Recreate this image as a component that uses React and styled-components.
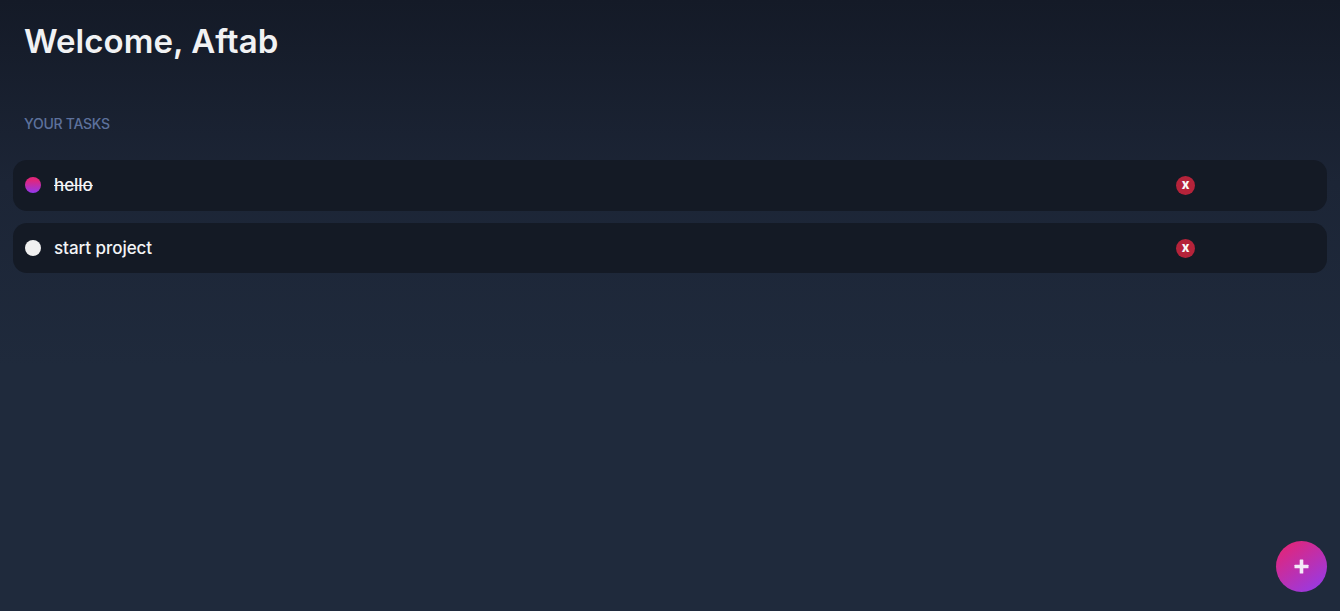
import React from 'react'
import styled, { createGlobalStyle } from 'styled-components'

const Global = createGlobalStyle`
	html, body, #root { height: 100%; }
	body {
		margin: 0;
		font-family: Inter, "Noto Sans", "Liberation Sans", sans-serif;
		color: #f3f4f6;
		background: #1f2a3c;
	}
`

const Page = styled.div`
	position: relative;
	box-sizing: border-box;
	height: 611px;
	overflow: hidden;
	padding: 0 13px;
	background: linear-gradient(180deg, #141a27 0%, #1c2536 30%, #1f2a3c 60%, #1f2a3c 100%);
`

const Heading = styled.h1`
	margin: 0;
	padding: 20px 0 0 11px;
	height: 42px;
	font-size: 33px;
	line-height: 42px;
	font-weight: 600;
	letter-spacing: 0.05px;
	color: #f1f2f4;
`

const Label = styled.div`
	margin-top: 50px;
	padding-left: 11px;
	font-size: 14px;
	line-height: 24px;
	font-weight: 500;
	letter-spacing: -0.27px;
	color: #5d719c;
`

const List = styled.div`
	margin-top: 24px;
	display: flex;
	flex-direction: column;
	gap: 12.4px;
`

const Row = styled.div`
	display: flex;
	align-items: center;
	height: 50.5px;
	padding: 0 132px 0 12px;
	border-radius: 14px;
	background: #141a25;
`

const Dot = styled.span`
	flex: none;
	width: 16px;
	height: 16px;
	border-radius: 50%;
	background: ${p => p.$done ? 'linear-gradient(180deg, #e0267c 20%, #9438ee 100%)' : '#f0f0f0'};
`

const Name = styled.span`
	flex: 1;
	margin-left: 13px;
	font-size: 17px;
	line-height: 24px;
	font-weight: 500;
	letter-spacing: -0.05px;
	color: #f3f4f6;
	text-decoration: ${p => p.$done ? 'line-through' : 'none'};
`

const Remove = styled.button`
	flex: none;
	display: flex;
	align-items: center;
	justify-content: center;
	width: 19px;
	height: 19px;
	padding: 0 0 2px;
	border: none;
	border-radius: 50%;
	background: #b5233a;
	color: #f8f8f8;
	font: 800 13px/1 Inter, sans-serif;
`

const Add = styled.button`
	position: absolute;
	right: 13px;
	bottom: 19px;
	display: flex;
	align-items: center;
	justify-content: center;
	width: 51px;
	height: 51px;
	padding: 0;
	border: none;
	border-radius: 50%;
	background: linear-gradient(145deg, #e0267c 12%, #8f3cf0 100%);
	color: #f3eaf8;
`

const tasks = [
	{ id: 1, title: 'hello', done: true },
	{ id: 2, title: 'start project', done: false },
]

const App = () => (
	<Page>
		<Global />
		<Heading>Welcome, Aftab</Heading>
		<Label>YOUR TASKS</Label>
		<List>
			{tasks.map(t => (
				<Row key={t.id}>
					<Dot $done={t.done} />
					<Name $done={t.done}>{t.title}</Name>
					<Remove>x</Remove>
				</Row>
			))}
		</List>
		<Add>
			<svg width="15" height="15" viewBox="0 0 15 15" fill="currentColor">
				<rect x="5.7" y="0.5" width="3.6" height="14" rx="0.6" />
				<rect x="0.5" y="5.7" width="14" height="3.6" rx="0.6" />
			</svg>
		</Add>
	</Page>
)

export default App
